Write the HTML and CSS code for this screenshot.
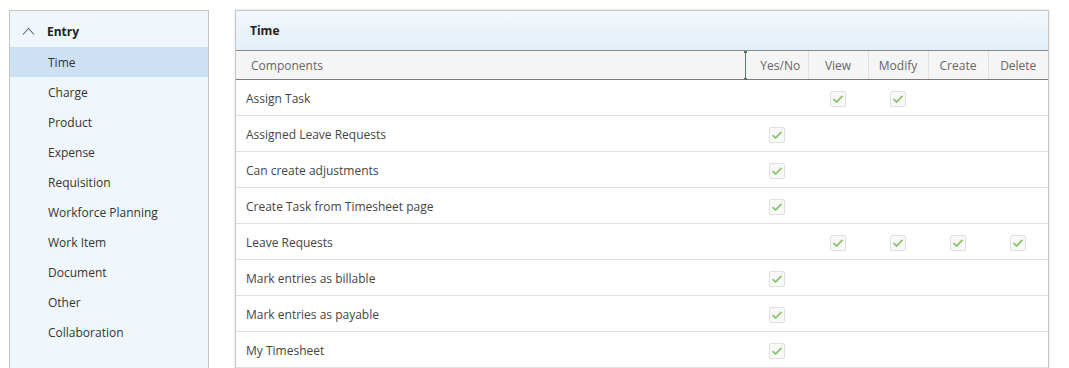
FILE: index.html
```html
<!DOCTYPE html>
<html lang="en">
<head>
    <meta charset="UTF-8">
    <title>Security Role - Entry</title>
    <link rel="stylesheet" href="styles.css">
</head>
<body>
    <div class="page">
        <div class="sidebar">
            <div class="group-title">
                <svg class="chevron" width="13" height="8" viewBox="0 0 13 8"><path d="M1 7.5 L6.5 1.5 L12 7.5" fill="none" stroke="#666" stroke-width="1.1"/></svg>
                <span>Entry</span>
            </div>
            <ul class="menu">
                <li class="active">Time</li>
                <li>Charge</li>
                <li>Product</li>
                <li>Expense</li>
                <li>Requisition</li>
                <li>Workforce Planning</li>
                <li>Work Item</li>
                <li>Document</li>
                <li>Other</li>
                <li>Collaboration</li>
            </ul>
        </div>

        <div class="panel">
            <div class="panel-title">Time</div>
            <table class="perm-table">
                <colgroup>
                    <col class="c-name">
                    <col class="c-yes">
                    <col class="c-op">
                    <col class="c-op">
                    <col class="c-op">
                    <col class="c-op">
                </colgroup>
                <thead>
                    <tr>
                        <th class="name-head">Components</th>
                        <th class="yes-head"><span class="resizer"></span>Yes/No</th>
                        <th>View</th>
                        <th>Modify</th>
                        <th>Create</th>
                        <th class="last">Delete</th>
                    </tr>
                </thead>
                <tbody id="permRows"></tbody>
            </table>
        </div>
    </div>

    <script>
        // y = Yes/No, v = View, m = Modify, c = Create, d = Delete
        let rows = [
            { name: "Assign Task", checks: "vm" },
            { name: "Assigned Leave Requests", checks: "y" },
            { name: "Can create adjustments", checks: "y" },
            { name: "Create Task from Timesheet page", checks: "y" },
            { name: "Leave Requests", checks: "vmcd" },
            { name: "Mark entries as billable", checks: "y" },
            { name: "Mark entries as payable", checks: "y" },
            { name: "My Timesheet", checks: "y" }
        ];

        let box = '<span class="check"><svg width="12" height="10" viewBox="0 0 12 10"><path d="M1.5 5.2 L4.6 8 L10.5 1.8" fill="none" stroke="#8cc46e" stroke-width="1.8"/></svg></span>';

        let table = document.getElementById("permRows");
        rows.forEach(function (r) {
            let html = '<td class="name">' + r.name + '</td>';
            "yvmcd".split("").forEach(function (k) {
                html += '<td class="cell">' + (r.checks.indexOf(k) >= 0 ? box : '') + '</td>';
            });
            let tr = document.createElement("tr");
            tr.innerHTML = html;
            table.appendChild(tr);
        });
    </script>
</body>
</html>
```

FILE: styles.css
```css
body {
    margin: 0;
    font-family: "Open Sans", Arial, sans-serif;
    font-size: 12px;
    color: #333;
    background: #fff;
}
.page {
    display: flex;
    align-items: flex-start;
    padding: 10px 0 0 9px;
}
.sidebar {
    width: 198px;
    height: 400px;
    border: 1px solid #c6c6c6;
    background: #f0f7fc;
}
.group-title {
    height: 32px;
    padding-top: 4px;
    display: flex;
    align-items: center;
    font-weight: bold;
    color: #222;
}
.chevron {
    margin: 0 12px 0 12px;
}
.menu {
    list-style: none;
    margin: 0;
    padding: 0;
}
.menu li {
    height: 29px;
    line-height: 29px;
    padding: 1px 0 0 38px;
    color: #333;
}
.menu li.active {
    background: #cde1f5;
}
.panel {
    width: 812px;
    margin-left: 26px;
    border: 1px solid #c6c6c6;
    box-shadow: 0 0 3px rgba(0, 0, 0, 0.12);
    background: #fff;
    height: 400px;
}
.panel-title {
    height: 38px;
    line-height: 38px;
    padding: 1px 0 0 14px;
    font-weight: bold;
    color: #222;
    background: linear-gradient(#f3f8fc, #e3eff8);
    border-bottom: 1px solid #8a8a8a;
}
.perm-table {
    width: 812px;
    table-layout: fixed;
    border-collapse: collapse;
}
.c-name { width: 509px; }
.c-yes { width: 63px; }
.c-op { width: 60px; }
.perm-table th {
    height: 28px;
    padding: 0;
    background: #f5f5f5;
    color: #666;
    font-weight: normal;
    text-align: center;
    border-bottom: 1px solid #7a7a7a;
    border-left: 1px solid #e2e2e2;
}
.perm-table th.name-head {
    text-align: left;
    padding-left: 15px;
    border-left: none;
}
.perm-table th.yes-head {
    position: relative;
    border-left: none;
    padding-left: 8px;
}
.resizer {
    position: absolute;
    left: 0;
    top: 0;
    bottom: -1px;
    width: 1px;
    background: #5d7a6c;
}
.resizer::before, .resizer::after {
    content: "";
    position: absolute;
    left: -1px;
    width: 3px;
    height: 2px;
    background: #5d6e66;
}
.resizer::before { top: 0; }
.resizer::after { bottom: 0; }
.perm-table td {
    height: 33px;
    padding: 2px 0 0 0;
    border-bottom: 1px solid #e0e0e0;
}
.perm-table td.name {
    padding-left: 10px;
    color: #444;
}
.perm-table td.cell {
    text-align: center;
}
.check {
    display: inline-flex;
    align-items: center;
    justify-content: center;
    width: 14px;
    height: 14px;
    border: 1px solid #e0e0e0;
    border-radius: 2px;
    background: #f8f8f8;
    vertical-align: middle;
}
```
